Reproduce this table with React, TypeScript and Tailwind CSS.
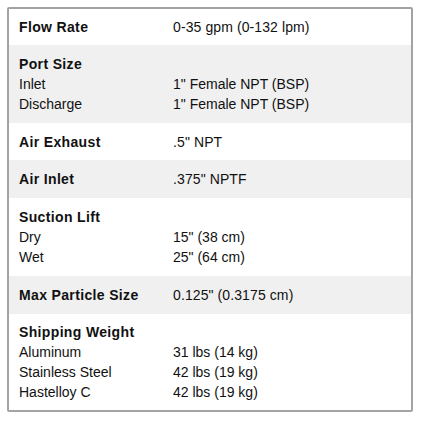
import React from "react";

type Row = {
  label: string;
  value?: string;
  sub?: [string, string][];
  gray: boolean;
  pad: string;
};

const rows: Row[] = [
  { label: "Flow Rate", value: "0-35 gpm (0-132 lpm)", gray: false, pad: "pt-[8px] pb-[8px]" },
  {
    label: "Port Size",
    sub: [
      ["Inlet", "1\" Female NPT (BSP)"],
      ["Discharge", "1\" Female NPT (BSP)"],
    ],
    gray: true,
    pad: "pt-[9px] pb-[9px]",
  },
  { label: "Air Exhaust", value: ".5\" NPT", gray: false, pad: "pt-[9px] pb-[8px]" },
  { label: "Air Inlet", value: ".375\" NPTF", gray: true, pad: "pt-[9px] pb-[9px]" },
  {
    label: "Suction Lift",
    sub: [
      ["Dry", "15\" (38 cm)"],
      ["Wet", "25\" (64 cm)"],
    ],
    gray: false,
    pad: "pt-[9px] pb-[9px]",
  },
  { label: "Max Particle Size", value: "0.125\" (0.3175 cm)", gray: true, pad: "pt-[9px] pb-[9px]" },
  {
    label: "Shipping Weight",
    sub: [
      ["Aluminum", "31 lbs (14 kg)"],
      ["Stainless Steel", "42 lbs (19 kg)"],
      ["Hastelloy C", "42 lbs (19 kg)"],
    ],
    gray: false,
    pad: "pt-[8px] pb-[8px]",
  },
];

export default function App() {
  return (
    <div
      className="w-[422px] h-[421px] bg-white pt-[7px] pl-[7px] text-[14px] leading-[20px] text-[#111]"
      style={{ fontFamily: '"Liberation Sans", Arial, sans-serif' }}
    >
      <div className="w-[406px] h-[405px] border-2 border-[#a3a3a3] rounded-[2px] overflow-hidden flex flex-col">
        {rows.map((r) => (
          <div key={r.label} className={`${r.gray ? "bg-[#f0f0f0]" : "bg-white"} ${r.pad} pl-[10px]`}>
            <div className="flex">
              <div className="w-[154px] font-bold tracking-[0.35px]">{r.label}</div>
              {r.value && <div className="tracking-[0.1px]">{r.value}</div>}
            </div>
            {r.sub &&
              r.sub.map(([k, v]) => (
                <div key={k} className="flex">
                  <div className="w-[154px]">{k}</div>
                  <div>{v}</div>
                </div>
              ))}
          </div>
        ))}
      </div>
    </div>
  );
}
